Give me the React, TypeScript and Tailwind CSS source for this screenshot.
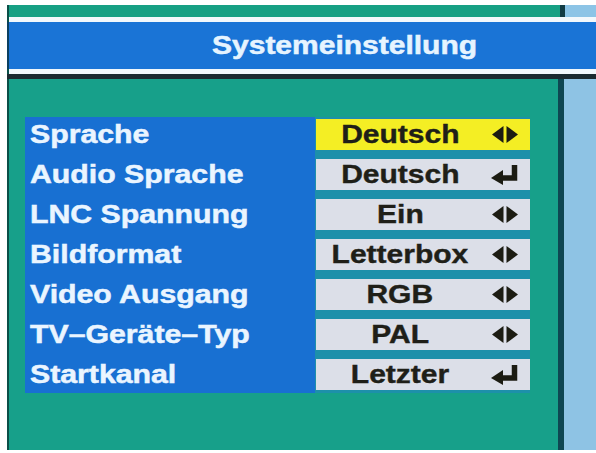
import React from 'react';

type Row = { label: string; value: string; icon: 'lr' | 'enter'; active?: boolean };

const rows: Row[] = [
  { label: 'Sprache', value: 'Deutsch', icon: 'lr', active: true },
  { label: 'Audio Sprache', value: 'Deutsch', icon: 'enter' },
  { label: 'LNC Spannung', value: 'Ein', icon: 'lr' },
  { label: 'Bildformat', value: 'Letterbox', icon: 'lr' },
  { label: 'Video Ausgang', value: 'RGB', icon: 'lr' },
  { label: 'TV–Geräte–Typ', value: 'PAL', icon: 'lr' },
  { label: 'Startkanal', value: 'Letzter', icon: 'enter' },
];

function LeftRightIcon() {
  return (
    <svg width="26" height="17" viewBox="0 0 26 17">
      <polygon points="11.5,0 0,8.5 11.5,17" fill="#1c1c12" />
      <polygon points="14.5,0 26,8.5 14.5,17" fill="#1c1c12" />
    </svg>
  );
}

function EnterIcon() {
  return (
    <svg width="28" height="21" viewBox="0 0 28 21">
      <path d="M23.5 1 V14 H10" fill="none" stroke="#1c1c12" strokeWidth="5.5" strokeLinejoin="miter" />
      <polygon points="12,6 0,14 12,21" fill="#1c1c12" />
    </svg>
  );
}

export default function App() {
  const font = { fontFamily: '"Liberation Sans", Arial, sans-serif' };

  return (
    <div className="w-[596px] h-[453px] bg-white overflow-hidden flex flex-col pt-[5px]" style={font}>
      {/* top strip */}
      <div className="flex h-[12px] ml-[7px]">
        <div className="w-[2px] bg-[#0b4f48]" />
        <div className="w-[551px] bg-[#16a084]" />
        <div className="w-[5px] bg-[#123c44]" />
        <div className="flex-1 bg-[#8cc4e6]" />
      </div>
      <div className="h-[5px] ml-[7px] flex">
        <div className="w-[2px] bg-[#0b4f48]" />
        <div className="flex-1 bg-[#f2f8fc]" />
      </div>

      {/* header */}
      <div className="h-[47px] ml-[7px] flex">
        <div className="w-[2px] bg-[#0b3f60]" />
        <div className="flex-1 bg-[#1a74d6] flex items-center pl-[203px]">
          <span className="inline-block origin-left scale-x-[1.2] text-[25px] font-bold text-[#e6f4ff] leading-none [-webkit-text-stroke:0.5px_currentColor]">
            Systemeinstellung
          </span>
        </div>
      </div>
      <div className="h-[5px] ml-[7px] flex">
        <div className="w-[2px] bg-[#0b4f48]" />
        <div className="flex-1 bg-[#f2f8fc]" />
      </div>
      <div className="h-[5px] ml-[7px] bg-[#1b2a30]" />

      {/* body */}
      <div className="h-[371px] ml-[7px] flex">
        <div className="w-[2px] bg-[#0b4f48]" />
        <div className="w-[549px] bg-[#17a08a] pl-[16px] pt-[38px]">
          <div className="flex">
            <div className="w-[290px] bg-[#1870d2] flex flex-col gap-[9px] pt-[2px] pb-[3px] pl-[5px]">
              {rows.map((r) => (
                <div key={r.label} className="h-[31px] flex items-center">
                  <span className="inline-block origin-left scale-x-[1.21] text-[25px] font-bold text-[#eaf5ff] leading-none [-webkit-text-stroke:0.5px_currentColor]">
                    {r.label}
                  </span>
                </div>
              ))}
            </div>
            <div className="w-[215px] bg-[#1d90aa] flex flex-col gap-[9px] pt-[2px] pb-[3px] pl-px">
              {rows.map((r) => (
                <div
                  key={r.label}
                  className={`h-[31px] flex items-center ${r.active ? 'bg-[#f4ee24]' : 'bg-[#dcdfe8]'}`}
                >
                  <div className="w-[168px] flex justify-center">
                    <span className="inline-block scale-x-[1.2] text-[25px] font-bold text-[#1f1f18] leading-none [-webkit-text-stroke:0.4px_currentColor]">
                      {r.value}
                    </span>
                  </div>
                  <div className="flex-1 flex items-center justify-center pr-[4px]">
                    {r.icon === 'lr' ? <LeftRightIcon /> : <EnterIcon />}
                  </div>
                </div>
              ))}
            </div>
          </div>
        </div>
        <div className="w-[6px] bg-[#0e4652]" />
        <div className="flex-1 bg-[#8ec3e4]" />
      </div>
    </div>
  );
}
